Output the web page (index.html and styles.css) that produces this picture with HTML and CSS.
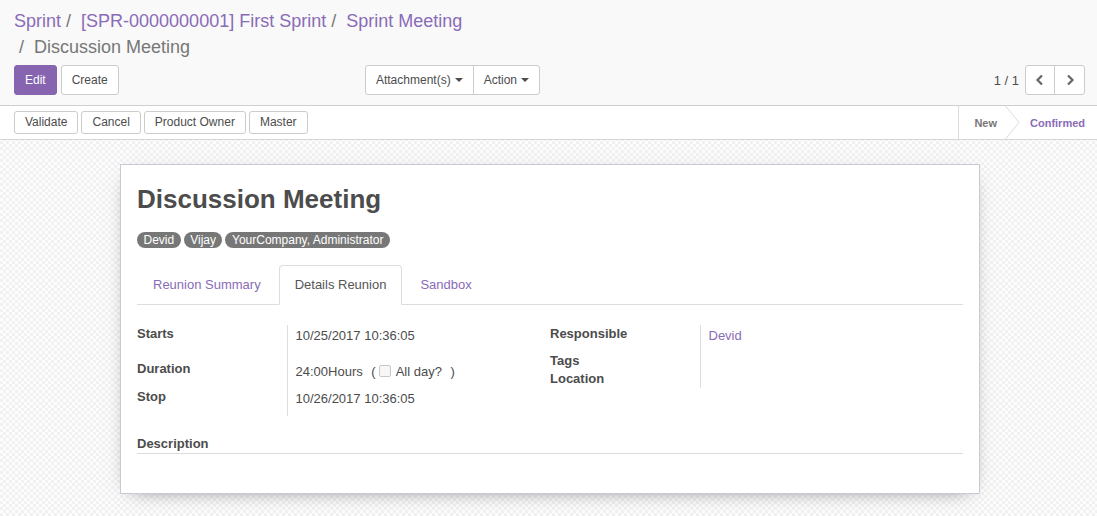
FILE: index.html
```
<!DOCTYPE html>
<html>
<head>
<meta charset="utf-8">
<link rel="stylesheet" href="styles.css">
</head>
<body>
<div class="cp">
  <div class="cp-left">
    <ol class="breadcrumb"><li><a>Sprint</a></li><li><a>[SPR-0000000001] First Sprint</a></li><li><a>Sprint Meeting</a></li><li class="active">Discussion Meeting</li></ol>
    <div class="cp-row">
      <div class="cp-buttons">
        <button class="btn btn-primary">Edit</button>
        <button class="btn">Create</button>
      </div>
      <div class="btn-group">
        <button class="btn">Attachment(s)<span class="caret"></span></button><button class="btn">Action<span class="caret"></span></button>
      </div>
    </div>
  </div>
  <div class="cp-right">
    <div class="pager">
      <span class="pager-value">1 / 1</span>
      <div class="btn-group">
        <button class="btn btn-icon"><svg width="10" height="12" viewBox="0 0 10 12"><polyline points="7,1.5 2.5,6 7,10.5" fill="none" stroke="#666" stroke-width="2.2"/></svg></button><button class="btn btn-icon"><svg width="10" height="12" viewBox="0 0 10 12"><polyline points="3,1.5 7.5,6 3,10.5" fill="none" stroke="#666" stroke-width="2.2"/></svg></button>
      </div>
    </div>
  </div>
</div>
<div class="statusbar">
  <div class="sb-buttons">
    <button class="btn btn-sm">Validate</button>
    <button class="btn btn-sm">Cancel</button>
    <button class="btn btn-sm">Product Owner</button>
    <button class="btn btn-sm">Master</button>
  </div>
  <div class="sb-status">
    <span class="st st-new">New</span>
    <svg class="st-arrow" width="15" height="33" viewBox="0 0 15 33"><polyline points="0.5,0 14,16.5 0.5,33" fill="none" stroke="#dcdcdc" stroke-width="1"/></svg>
    <span class="st st-current">Confirmed</span>
  </div>
</div>
<div class="content">
  <div class="sheet">
    <h1 class="title">Discussion Meeting</h1>
    <div class="tags"><span class="tag">Devid</span><span class="tag">Vijay</span><span class="tag">YourCompany, Administrator</span></div>
    <ul class="tabs">
      <li><a>Reunion Summary</a></li>
      <li class="active"><a>Details Reunion</a></li>
      <li><a>Sandbox</a></li>
    </ul>
    <div class="groups">
      <table class="grp">
        <tr class="r1"><td class="lbl">Starts</td><td class="val v1">10/25/2017 10:36:05</td></tr>
        <tr class="r2"><td class="lbl">Duration</td><td class="val v2">24:00Hours <span class="paren">(</span><span class="cb"></span>All day? <span class="paren2">)</span></td></tr>
        <tr class="r3"><td class="lbl">Stop</td><td class="val v3">10/26/2017 10:36:05</td></tr>
      </table>
      <table class="grp">
        <tr class="rr1"><td class="lbl">Responsible</td><td class="val v1"><a class="link">Devid</a></td></tr>
        <tr class="rr2"><td class="lbl">Tags</td><td class="val"></td></tr>
        <tr class="rr2"><td class="lbl">Location</td><td class="val"></td></tr>
      </table>
    </div>
    <div class="desc">Description</div>
  </div>
</div>
</body>
</html>
```
FILE: styles.css
```
* { box-sizing: border-box; }
html, body { margin: 0; padding: 0; }
body {
  width: 1097px;
  height: 516px;
  overflow: hidden;
  font-family: "Liberation Sans", Arial, sans-serif;
  font-size: 13px;
  color: #4c4c4c;
  background-color: #fbfbfb;
  background-image: repeating-conic-gradient(#f1f1f1 0 25%, #fdfdfd 0 50%);
  background-size: 6px 6px;
}
.cp {
  display: flex;
  padding: 8px 12px 10px 14px;
  background: #f9f9f9;
  border-bottom: 1px solid #cfcfcf;
}
.cp-left { width: 526px; }
.cp-right { flex: 1; display: flex; flex-direction: column; justify-content: flex-end; }
.breadcrumb {
  margin: 0;
  padding: 0;
  list-style: none;
  font-size: 18px;
  line-height: 26px;
}
.breadcrumb li { display: inline-block; color: #8a6bb7; }
.breadcrumb li + li:before {
  content: "/\00a0";
  padding: 0 5px;
  color: #777;
}
.breadcrumb li.active { color: #777; }
.cp-row {
  margin-top: 5px;
  display: flex;
  justify-content: space-between;
}
.cp-buttons { display: flex; gap: 4px; }
.btn {
  font-family: inherit;
  font-size: 12px;
  line-height: 18px;
  padding: 5px 10px;
  background: #fff;
  color: #4c4c4c;
  border: 1px solid #ccc;
  border-radius: 3px;
  display: inline-flex;
  align-items: center;
  margin: 0;
}
.btn-primary {
  background: #8764af;
  border-color: #8764af;
  color: #fff;
}
.btn-group { display: flex; }
.btn-group .btn { border-radius: 0; }
.btn-group .btn:first-child { border-radius: 3px 0 0 3px; }
.btn-group .btn:last-child { border-radius: 0 3px 3px 0; margin-left: -1px; }
.caret {
  display: inline-block;
  width: 0; height: 0;
  margin-left: 4px;
  border-top: 4px solid #4c4c4c;
  border-left: 4px solid transparent;
  border-right: 4px solid transparent;
}
.pager { display: flex; align-items: center; justify-content: flex-end; }
.pager-value { margin-right: 6px; font-size: 13px; }
.btn-icon { width: 31px; height: 30px; padding: 0; justify-content: center; }
.btn-group .btn-icon:first-child { width: 30px; }
.statusbar {
  height: 34px;
  display: flex;
  align-items: center;
  justify-content: space-between;
  background: #fff;
  border-bottom: 1px solid #d6d6d6;
  padding-left: 14px;
}
.sb-buttons { display: flex; gap: 3px; }
.btn-sm { padding: 2px 10px; line-height: 17px; }
.sb-status { display: flex; align-items: stretch; height: 33px; align-self: flex-start; }
.st {
  display: flex;
  align-items: center;
  font-size: 11px;
  font-weight: bold;
}
.st-new {
  border-left: 1px solid #dcdcdc;
  padding: 0 8px 0 15px;
  color: #777;
}
.st-arrow { display: block; }
.st-current { padding: 0 12px 0 10px; color: #8a6bb7; }
.content { padding: 24px 0 0 120px; }
.sheet {
  width: 860px;
  background: #fff;
  border: 1px solid #c9c8d5;
  box-shadow: 0 5px 20px -12px rgba(0,0,0,0.7);
  padding: 20px 16px 39px 16px;
}
.title {
  margin: 0;
  font-size: 26px;
  line-height: 28px;
  font-weight: bold;
  color: #4c4c4c;
}
.tags { margin-top: 19px; display: flex; gap: 3px; height: 16px; }
.tag {
  background: #777;
  color: #fff;
  font-size: 12px;
  line-height: 16px;
  height: 16px;
  padding: 0 6.5px;
  border-radius: 8px;
}
.tabs {
  margin: 17px 0 0;
  padding: 0;
  list-style: none;
  display: flex;
  border-bottom: 1px solid #ddd;
}
.tabs li { margin-right: 2px; margin-bottom: -1px; }
.tabs a {
  display: block;
  padding: 10px 15px;
  line-height: 18px;
  border: 1px solid transparent;
  border-radius: 4px 4px 0 0;
  color: #8a6bb7;
}
.tabs li.active a {
  color: #555;
  border-color: #ddd #ddd #fff;
  background: #fff;
}
.groups { display: flex; align-items: flex-start; margin-top: 20px; }
.grp { width: 413px; border-collapse: collapse; }
.grp td { padding: 0; vertical-align: top; line-height: 18px; }
.lbl { width: 150px; font-weight: bold; }
.val { border-left: 1px solid #ddd; padding-left: 8px !important; }
.r1 td { height: 35px; }
.r2 td { height: 28px; }
.r3 td { height: 28px; }
.rr1 td { height: 27px; }
.rr2 td { height: 18px; }
.v1 { padding-top: 2px !important; }
.v2 { padding-top: 3px !important; }
.v3 { padding-top: 2px !important; }
.paren { margin-left: 5px; }
.cb {
  display: inline-block;
  width: 12px;
  height: 12px;
  border: 1px solid #c8c8c8;
  border-radius: 2px;
  background: #f7f7f7;
  vertical-align: -1px;
  margin: 0 5px 0 3px;
}
.paren2 { margin-left: 5px; }
.link { color: #8a6bb7; }
.desc {
  margin-top: 19px;
  font-weight: bold;
  line-height: 18px;
  border-bottom: 1px solid #dcdcdc;
}
```
